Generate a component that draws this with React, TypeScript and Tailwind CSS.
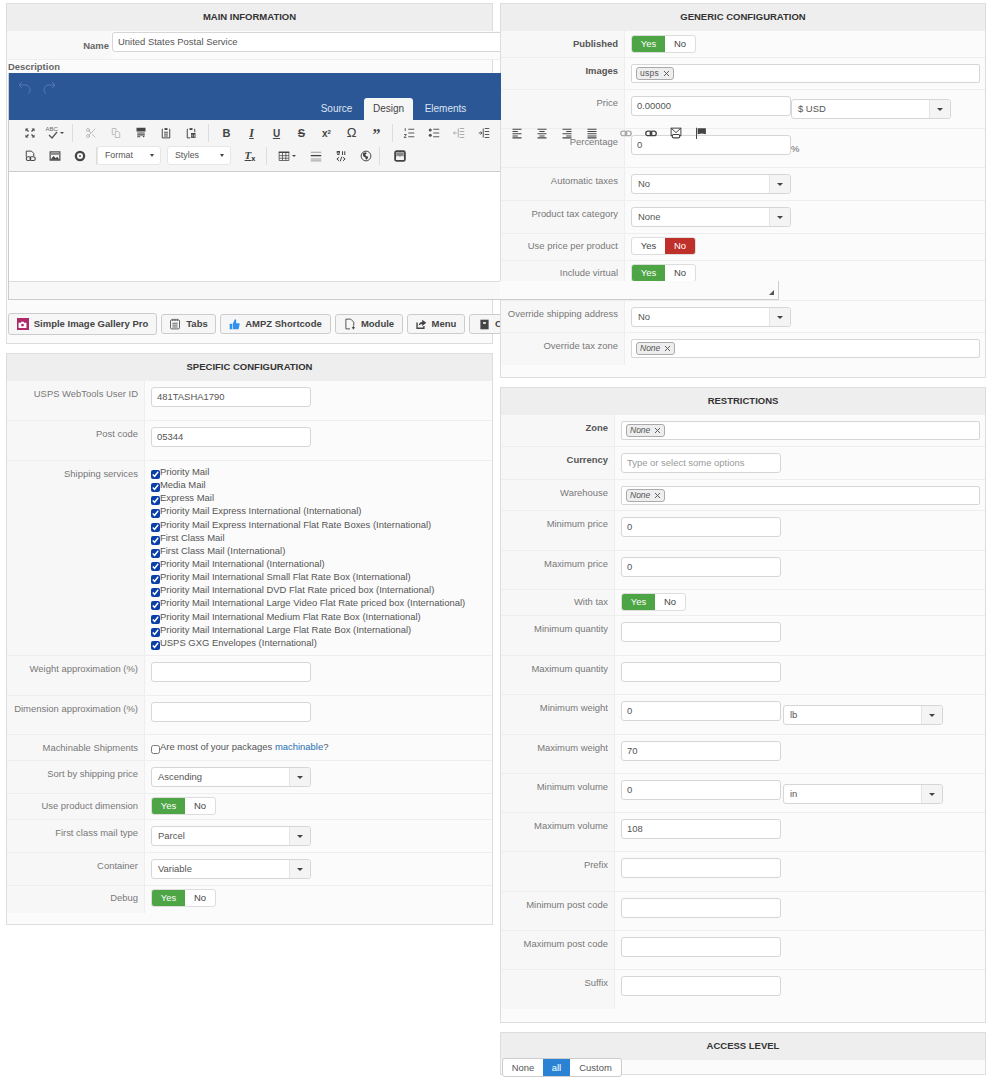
import React from "react";
import { Scissors, X } from "lucide-react";

const font = "font-['Liberation_Sans',Arial,sans-serif]";

function Header({ title, h = "h-[27px]" }: { title: string; h?: string }) {
  return (
    <div className={`${h} bg-[#eeeeee] flex items-center justify-center text-[9.5px] font-bold text-[#333] shrink-0`}>
      {title}
    </div>
  );
}

function Panel({ className, children }: { className: string; children: React.ReactNode }) {
  return <div className={`border border-[#dddddd] bg-[#fbfbfb] flex flex-col ${className}`}>{children}</div>;
}

function Row({ h, lw, label, bold, tight, flat, children }: { h: string; lw: string; label: string; bold?: boolean; tight?: boolean; flat?: boolean; children?: React.ReactNode }) {
  return (
    <div className={`flex shrink-0 ${h} ${flat ? "" : "border-b border-[#eeeeee]"}`}>
      <div className={`${lw} shrink-0 bg-[#f7f7f7] border-r border-[#eeeeee] text-right pr-[6px] ${tight ? "pt-[6px]" : "pt-[7px]"} text-[9.45px] leading-[12px] whitespace-nowrap ${bold ? "font-bold text-[#555]" : "text-[#777]"}`}>
        {label}
      </div>
      <div className={`pl-[6px] ${tight ? "pt-[3px]" : "pt-[6px]"} flex items-start flex-1 min-w-0`}>{children}</div>
    </div>
  );
}

function Input({ value = "", w = "w-[160px]", placeholder }: { value?: string; w?: string; placeholder?: string }) {
  return (
    <input
      readOnly
      value={value}
      placeholder={placeholder}
      className={`${w} h-[20px] border border-[#d6d6d6] rounded-[3px] bg-white px-[5px] pb-[2px] text-[9.45px] text-[#555] placeholder:text-[#999] outline-none shrink-0`}
    />
  );
}

function Select({ value, extra = "" }: { value: string; extra?: string }) {
  return (
    <div className={`w-[160px] h-[20px] border border-[#d6d6d6] rounded-[3px] bg-white flex items-stretch shrink-0 ${extra}`}>
      <div className="flex-1 pl-[6px] text-[9.45px] text-[#555] leading-[17px]">{value}</div>
      <div className="w-[21px] bg-[#f4f4f4] border-l border-[#e4e4e4] rounded-r-[3px] flex items-center justify-center">
        <span className="w-0 h-0 border-l-[3px] border-r-[3px] border-t-[3px] border-l-transparent border-r-transparent border-t-[#444]" />
      </div>
    </div>
  );
}

function Toggle({ yes, no, extra = "" }: { yes?: boolean; no?: boolean; extra?: string }) {
  return (
    <div className={`flex h-[18px] border border-[#dddddd] rounded-[3px] bg-white text-[9.45px] leading-[16px] text-center overflow-hidden shrink-0 ${extra}`}>
      <div className={`w-[33px] ${yes ? "bg-[#4da545] text-white" : "text-[#444]"}`}>Yes</div>
      <div className={`w-[30px] ${no ? "bg-[#c0302b] text-white" : "text-[#444]"}`}>No</div>
    </div>
  );
}

function Chosen({ tag, italic, w = "w-[349px]" }: { tag: string; italic?: boolean; w?: string }) {
  return (
    <div className={`${w} h-[19px] border border-[#d6d6d6] rounded-[2px] bg-white flex items-start pl-[4px] pt-[2px] shrink-0`}>
      <span className={`h-[13px] border border-[#aaaaaa] rounded-[3px] bg-[#eeeeee] pl-[3px] pr-[2px] flex items-center gap-[3px] text-[8.5px] text-[#555] ${italic ? "italic" : "tracking-[0.3px]"}`}>
        {tag}
        <X size={9} strokeWidth={2.5} className="text-[#555]" />
      </span>
    </div>
  );
}

const services = [
  "Priority Mail",
  "Media Mail",
  "Express Mail",
  "Priority Mail Express International (International)",
  "Priority Mail Express International Flat Rate Boxes (International)",
  "First Class Mail",
  "First Class Mail (International)",
  "Priority Mail International (International)",
  "Priority Mail International Small Flat Rate Box (International)",
  "Priority Mail International DVD Flat Rate priced box (International)",
  "Priority Mail International Large Video Flat Rate priced box (International)",
  "Priority Mail International Medium Flat Rate Box (International)",
  "Priority Mail International Large Flat Rate Box (International)",
  "USPS GXG Envelopes (International)",
];

function Ico({ children, w = "w-[25px]", extra = "" }: { children: React.ReactNode; w?: string; extra?: string }) {
  return <div className={`${w} h-[18px] flex items-center justify-center text-[#444] shrink-0 ${extra}`}>{children}</div>;
}
function Sep({ w = "w-[9px]", extra = "" }: { w?: string; extra?: string }) {
  return (
    <div className={`${w} h-[18px] flex justify-center shrink-0 ${extra}`}>
      <div className="w-px h-full bg-[#dddddd]" />
    </div>
  );
}
function Caret() {
  return <span className="ml-[2px] w-0 h-0 border-l-[2px] border-r-[2px] border-t-[2px] border-l-transparent border-r-transparent border-t-[#444]" />;
}
function Combo({ label }: { label: string }) {
  return (
    <div className="w-[64px] h-[19px] bg-white border border-[#e6e6e6] rounded-[3px] flex items-center justify-between pl-[7px] pr-[6px] text-[8.8px] text-[#555] shrink-0">
      {label}
      <span className="w-0 h-0 border-l-[2px] border-r-[2px] border-t-[3px] border-l-transparent border-r-transparent border-t-[#444]" />
    </div>
  );
}
function Btn({ w, icon, label, tall }: { w: string; icon: React.ReactNode; label: string; tall?: boolean }) {
  return (
    <div className={`${w} ${tall ? "h-[22px]" : "h-[20px]"} shrink-0 border border-[#cccccc] rounded-[3px] bg-[#f6f6f6] flex items-center justify-center gap-[5px] text-[9.5px] font-bold text-[#444] whitespace-nowrap`}>
      {icon}
      {label}
    </div>
  );
}

function Svg({ children, size = 12, vb = 16 }: { children: React.ReactNode; size?: number; vb?: number }) {
  return (
    <svg width={size} height={size} viewBox={`0 0 ${vb} ${vb}`} fill="none" stroke="currentColor" strokeWidth="1.3">
      {children}
    </svg>
  );
}

const IFull = () => (
  <Svg>
    <path d="M2 2h4L2 6zM14 2h-4l4 4zM2 14h4l-4-4zM14 14h-4l4-4z" fill="currentColor" stroke="none" />
    <path d="M4 4l2 2M12 4l-2 2M4 12l2-2M12 12l-2-2" strokeWidth="1.6" />
  </Svg>
);
const ISpell = () => (
  <span className="relative w-[12px] h-[12px] block">
    <span className="absolute left-0 top-[-1px] text-[6px] leading-[7px] text-[#666]">ABC</span>
    <svg className="absolute left-[1px] top-[4px]" width="11" height="8" viewBox="0 0 11 8" fill="none" stroke="#555" strokeWidth="1.3"><path d="M2 4l3 3 5-6" /></svg>
  </span>
);
const ICopy = () => (
  <Svg>
    <path d="M3 2h5v3M3 2v8h3" />
    <path d="M7 6h4l2 2v6H7z" />
  </Svg>
);
const IPasteDark = () => (
  <Svg>
    <path d="M2 1h12v5H2z" fill="currentColor" stroke="none" />
    <path d="M3 8h10M3 10.500h10M3 13h4" strokeWidth="1.4" />
    <path d="M10 12l1.500 2 1.500-2" fill="currentColor" stroke="none" />
  </Svg>
);
const IPasteText = () => (
  <Svg>
    <path d="M4 3H3v11.500h10V3h-1" />
    <path d="M6 1.500h4V4H6z" fill="currentColor" stroke="none" />
    <path d="M5.500 7h5M5.500 9.500h5M5.500 12h5" />
  </Svg>
);
const IPasteWord = () => (
  <Svg>
    <path d="M4 3H3v11.500h4M12 3h1v4" />
    <path d="M6 1.500h4V4H6z" fill="currentColor" stroke="none" />
    <rect x="8" y="8" width="6" height="6.500" fill="currentColor" stroke="none" />
    <path d="M9.500 10v3M12.500 10v3" stroke="#fff" strokeWidth="1" />
  </Svg>
);
const ILines = ({ kind }: { kind: "ol" | "ul" | "out" | "in" }) => (
  <Svg>
    {kind === "ol" || kind === "ul" ? (
      <>
        <path d="M7 3h8M7 8h8M7 13h8" />
        {kind === "ol" ? (
          <path d="M3 1.500v4M1.500 10h3l-3 4h3" strokeWidth="1.200" />
        ) : (
          <>
            <circle cx="3" cy="4" r="2" fill="currentColor" stroke="none" />
            <circle cx="3" cy="11" r="2" fill="currentColor" stroke="none" />
          </>
        )}
      </>
    ) : (
      <>
        <path d="M9 2h6M9 6h6M9 10h6M9 14h6" />
        <path d="M7 2v12" />
        {kind === "in" ? <path d="M1 8h4M3.500 6l2 2-2 2" /> : <path d="M5 8H1M2.500 6l-2 2 2 2" />}
      </>
    )}
  </Svg>
);
const IAlign = ({ a }: { a: "l" | "c" | "r" | "j" }) => {
  const d =
    a === "l" ? "M2 3h12M2 6h7M2 9h12M2 12h7M2 14.500h12"
    : a === "c" ? "M2 3h12M4.500 6h7M2 9h12M4.500 12h7M2 14.500h12"
    : a === "r" ? "M2 3h12M7 6h7M2 9h12M7 12h7M2 14.500h12"
    : "M2 3h12M2 6h12M2 9h12M2 12h12M2 14.500h12";
  return <Svg><path d={d} strokeWidth="1.500" /></Svg>;
};
const IChain = ({ gray }: { gray?: boolean }) => (
  <Svg>
    <g stroke={gray ? "#aaa" : "currentColor"} strokeWidth="1.800">
      <rect x="1" y="5.500" width="8" height="6" rx="3" />
      <rect x="7" y="5.500" width="8" height="6" rx="3" />
    </g>
  </Svg>
);
const IAnchorMail = () => (
  <Svg>
    <rect x="1.500" y="1.500" width="13" height="10" />
    <path d="M1.500 1.500l6.500 6 6.500-6" />
    <rect x="3" y="10" width="10" height="4.500" rx="2" fill="#fbfbfb" strokeWidth="1.600" />
  </Svg>
);
const IFlag = () => (
  <Svg>
    <path d="M2 1v15" strokeWidth="1.300" />
    <path d="M3.500 1.500h11v8l-5.500-1-5.500 1z" fill="currentColor" stroke="none" />
  </Svg>
);
const IDocLink = () => (
  <Svg>
    <path d="M3 9V1.500h7l3 3V8" />
    <rect x="3" y="9" width="6" height="5" rx="2.500" strokeWidth="1.500" />
    <rect x="8" y="9" width="7" height="5" rx="2.500" strokeWidth="1.500" />
  </Svg>
);
const IImage = () => (
  <Svg>
    <rect x="1.500" y="2.500" width="13" height="11" strokeWidth="1.500" />
    <path d="M2 13l4-5 3 3 2-2 3 4z" fill="currentColor" stroke="none" />
    <rect x="2.500" y="3.500" width="11" height="3" fill="#888" stroke="none" />
  </Svg>
);
const IDisc = () => (
  <Svg>
    <circle cx="8" cy="8" r="5.500" strokeWidth="3" />
    <circle cx="8" cy="8" r="1.200" fill="currentColor" stroke="none" />
  </Svg>
);
const ITable = () => (
  <span className="flex items-center">
    <Svg>
      <path d="M1 2h14v2H1z" fill="currentColor" stroke="none" />
      <path d="M1.500 3v11h13V3M1.500 7.500h13M1.500 11h13M6 4v10M10.500 4v10" strokeWidth="1" />
    </Svg>
    <Caret />
  </span>
);
const IHr = () => (
  <Svg>
    <path d="M1 3h14M1 12h14M1 14.500h14" stroke="#999" strokeWidth="1.300" />
    <path d="M1 7.500h14" strokeWidth="1.800" />
  </Svg>
);
const ICode = () => (
  <Svg>
    <path d="M3 2h3v2H3zM3 6h3M10 1.500v5M13 1.500v5" strokeWidth="1.400" />
    <path d="M5.500 9.500L2.500 12l3 2.500M10.500 9.500l3 2.500-3 2.500M9 9l-2 6" strokeWidth="1.300" />
  </Svg>
);
const IGlobe = () => (
  <Svg>
    <circle cx="8" cy="8" r="6.500" />
    <path d="M4 4l4-1 1 2-2 1 1 2 3 1-1 3-2 1-1-3-3-2z" fill="currentColor" stroke="none" />
  </Svg>
);
const IWidget = () => (
  <Svg>
    <rect x="1.500" y="1.500" width="13" height="13" rx="2" strokeWidth="2.400" />
    <path d="M3 3h10v6l-2-1.500-3 1.500-3-1.500-2 1.500z" fill="#888" stroke="none" />
  </Svg>
);
const ITabsDoc = () => (
  <Svg size={12}>
    <rect x="2" y="2.500" width="12" height="12" rx="1.500" strokeWidth="1.100" />
    <path d="M5 1v3M8 1v3M11 1v3M4.500 7h7M4.500 9.500h7M4.500 12h7" strokeWidth="1.100" />
  </Svg>
);
const IModule = () => (
  <Svg size={12}>
    <path d="M8 14.500H2.500v-13H9l4 4v5" strokeWidth="1.200" />
    <path d="M12.500 11v4M10.500 13h4" strokeWidth="1.500" />
  </Svg>
);
const IMenu = () => (
  <Svg size={11}>
    <path d="M1.500 5v8.500h10V10" strokeWidth="2" />
    <path d="M9 1l6 4.500L9 10V7.500c-3 0-4 1-5 2.500 0-3 2-5.500 5-5.500z" fill="currentColor" stroke="none" />
  </Svg>
);
const IContact = () => (
  <Svg size={11}>
    <path d="M2 1h12v14H2z" fill="currentColor" stroke="none" />
    <path d="M6 4.500h4v2.500H6z" fill="#f6f6f6" stroke="none" />
  </Svg>
);
const IThumb = () => (
  <svg width="11" height="11" viewBox="0 0 16 16" fill="#3090f0">
    <rect x="1" y="7" width="3.500" height="8" rx="0.500" />
    <path d="M5.500 7l3-6.500c1.500 0 2 1 2 2V6h4c.8 0 1.200.8 1 1.500l-1.500 6.500c-.2.700-.7 1-1.300 1H5.500z" />
  </svg>
);
const IGallery = () => (
  <span className="w-[12px] h-[12px] bg-[#b02a6a] flex items-center justify-center">
    <svg width="9" height="9" viewBox="0 0 16 16" fill="#fff">
      <path d="M1 5h4l1-2h4l1 2h4v9H1z" />
      <circle cx="8" cy="9" r="2.500" fill="#b02a6a" />
    </svg>
  </span>
);

export default function App() {
  return (
    <div className={`relative w-[996px] h-[1080px] overflow-hidden bg-white pl-[6px] pt-[3px] flex gap-[7px] ${font}`}>
      {/* LEFT */}
      <div className="w-[487px] shrink-0 flex flex-col gap-[9px]">
        <Panel className="h-[341px] bg-[#f5f5f5]">
          <Header title="MAIN INFORMATION" />
          <div className="w-[494px] h-[312px] overflow-hidden">
            <div className="flex h-[29px] border-b border-[#eeeeee]">
              <div className="w-[104px] shrink-0 bg-[#f8f8f8] text-right pr-[2px] pt-[9px] text-[9.45px] leading-[12px] font-bold text-[#666]">Name</div>
              <div className="pl-[1px] pt-[1px] bg-[#fbfbfb] flex-1 flex items-start">
                <Input value="United States Postal Service" w="w-[420px]" />
              </div>
            </div>
            <div className="pl-[1px] h-[13px] text-[9.45px] leading-[14px] font-bold text-[#666]">Description</div>
            <div className="ml-[1px] w-[520px] border-x border-b border-[#cccccc]">
              <div className="h-[47px] bg-[#2b5797] relative flex items-end">
                <div className="absolute left-[8px] top-[7px] flex gap-[8px] text-[#5e80b4]">
                  <Svg size={16}><path d="M5 2L2 5l3 3M2 5h6c3 0 5 2 5 5 0 2-1 3-2 4" strokeWidth="0.800" /></Svg>
                  <Svg size={16}><path d="M11 2l3 3-3 3M14 5H8C5 5 3 7 3 10c0 2 1 3 2 4" strokeWidth="0.800" /></Svg>
                </div>
                <div className="flex ml-[300px] text-[10px] leading-[22px] text-[#dde4f0]">
                  <div className="w-[55px] text-center">Source</div>
                  <div className="w-[49px] bg-[#f6f6f6] rounded-t-[3px] text-center text-[#444]">Design</div>
                  <div className="w-[65px] text-center">Elements</div>
                </div>
              </div>
              <div className="h-[52px] bg-[#f5f5f5] border-b border-[#cccccc] pl-[8px] pt-[4px] flex flex-col gap-[4px]">
                <div className="flex items-center">
                  <Ico><IFull /></Ico>
                  <Ico><ISpell /><Caret /></Ico>
                  <Sep w="w-[11px]" />
                  <Ico><span className="text-[#aaa]"><Scissors size={12} strokeWidth={1.5} /></span></Ico>
                  <Ico><span className="text-[#bbb]"><ICopy /></span></Ico>
                  <Ico><IPasteDark /></Ico>
                  <Ico><IPasteText /></Ico>
                  <Ico><IPasteWord /></Ico>
                  <Sep w="w-[11px]" />
                  <Ico><span className="font-bold text-[11px]">B</span></Ico>
                  <Ico><span className="italic font-bold font-['Liberation_Serif',serif] text-[12px] underline">I</span></Ico>
                  <Ico><span className="underline font-bold text-[10px]">U</span></Ico>
                  <Ico><span className="line-through font-bold text-[11px]">S</span></Ico>
                  <Ico><span className="font-bold text-[10px]">x<sup className="text-[6px]">2</sup></span></Ico>
                  <Ico><span className="text-[13px]">Ω</span></Ico>
                  <Ico><span className="font-bold font-['Liberation_Serif',serif] text-[16px] leading-[16px] mt-[4px]">”</span></Ico>
                  <Sep w="w-[7px]" />
                  <Ico><span className="text-[#555]"><ILines kind="ol" /></span></Ico>
                  <Ico><span className="text-[#555]"><ILines kind="ul" /></span></Ico>
                  <Ico><span className="text-[#aaa]"><ILines kind="out" /></span></Ico>
                  <Ico><span className="text-[#555]"><ILines kind="in" /></span></Ico>
                  <Sep />
                </div>
                <div className="flex items-center">
                  <Ico><IDocLink /></Ico>
                  <Ico><IImage /></Ico>
                  <Ico><IDisc /></Ico>
                  <Sep />
                  <div className="flex gap-[6px] ml-[-4px]">
                    <Combo label="Format" />
                    <Combo label="Styles" />
                  </div>
                  <Ico w="w-[24px]" extra="ml-[7px]"><span className="italic font-bold font-['Liberation_Serif',serif] text-[11px] underline">T<sub className="text-[7px] not-italic font-sans">x</sub></span></Ico>
                  <Sep />
                  <Ico w="w-[32px]"><ITable /></Ico>
                  <Ico w="w-[26px]"><IHr /></Ico>
                  <Ico w="w-[24px]"><ICode /></Ico>
                  <Ico w="w-[26px]"><IGlobe /></Ico>
                  <Sep extra="ml-[-4px]" />
                  <Ico w="w-[32px]"><IWidget /></Ico>
                </div>
              </div>
              <div className="h-[109px] bg-white" />
              <div className="h-[18px] bg-[#f8f8f8] border-t border-[#dddddd]" />
            </div>
            <div className="flex items-center gap-[4px] pl-[1px] pt-[13px]">
              <Btn tall w="w-[149px]" icon={<IGallery />} label="Simple Image Gallery Pro" />
              <Btn w="w-[55px]" icon={<ITabsDoc />} label="Tabs" />
              <Btn w="w-[111px]" icon={<IThumb />} label="AMPZ Shortcode" />
              <Btn w="w-[68px]" icon={<IModule />} label="Module" />
              <Btn w="w-[58px]" icon={<IMenu />} label="Menu" />
              <div className="h-[20px] w-[40px] shrink-0 border border-[#cccccc] rounded-[3px] bg-[#f6f6f6] flex items-center pl-[9px] gap-[5px] text-[9.5px] font-bold text-[#444]">
                <IContact />
                <span>C</span>
              </div>
            </div>
          </div>
        </Panel>

        <Panel className="h-[572px]">
          <Header title="SPECIFIC CONFIGURATION" />
          <Row h="h-[40px]" lw="w-[138px]" label="USPS WebTools User ID"><Input value="481TASHA1790" /></Row>
          <Row h="h-[40px]" lw="w-[138px]" label="Post code"><Input value="05344" /></Row>
          <Row h="h-[195px]" lw="w-[138px]" label="Shipping services">
            <div className="flex flex-col text-[9.45px] text-[#555] mt-[-1px]">
              {services.map((t) => (
                <label key={t} className="flex h-[13.15px] leading-[12px]">
                  <input type="checkbox" readOnly checked className="w-[9px] h-[9px] m-0 mt-[4px] shrink-0 accent-[#0b3fa8]" />
                  <span className="whitespace-nowrap">{t}</span>
                </label>
              ))}
            </div>
          </Row>
          <Row h="h-[40px]" lw="w-[138px]" label="Weight approximation (%)"><Input /></Row>
          <Row h="h-[39px]" lw="w-[138px]" label="Dimension approximation (%)"><Input /></Row>
          <Row h="h-[26px]" lw="w-[138px]" label="Machinable Shipments">
            <label className="flex text-[9.45px] leading-[12px] text-[#555]">
              <input type="checkbox" readOnly className="w-[9px] h-[9px] m-0 mt-[4px] shrink-0" />
              <span>Are most of your packages <span className="text-[#1f6fb2]">machinable</span>?</span>
            </label>
          </Row>
          <Row h="h-[33px]" lw="w-[138px]" label="Sort by shipping price"><Select value="Ascending" /></Row>
          <Row tight h="h-[26px]" lw="w-[138px]" label="Use product dimension"><Toggle yes /></Row>
          <Row h="h-[33px]" lw="w-[138px]" label="First class mail type"><Select value="Parcel" /></Row>
          <Row h="h-[33px]" lw="w-[138px]" label="Container"><Select value="Variable" /></Row>
          <Row tight flat h="h-[27px]" lw="w-[138px]" label="Debug"><Toggle yes /></Row>
        </Panel>
      </div>

      {/* RIGHT */}
      <div className="w-[486px] shrink-0 flex flex-col gap-[9px]">
        <Panel className="h-[375px]">
          <Header title="GENERIC CONFIGURATION" />
          <Row h="h-[27px]" lw="w-[124px]" label="Published" bold><Toggle yes extra="mt-[-2px]" /></Row>
          <Row h="h-[32px]" lw="w-[124px]" label="Images" bold><Chosen tag="usps" /></Row>
          <Row h="h-[39px]" lw="w-[124px]" label="Price">
            <Input value="0.00000" />
            <Select value="$ USD" extra="mt-[3px]" />
          </Row>
          <Row h="h-[39px]" lw="w-[124px]" label="Percentage">
            <Input value="0" />
            <span className="text-[9.45px] text-[#666] mt-[7px]">%</span>
          </Row>
          <Row h="h-[33px]" lw="w-[124px]" label="Automatic taxes"><Select value="No" /></Row>
          <Row h="h-[33px]" lw="w-[124px]" label="Product tax category"><Select value="None" /></Row>
          <Row tight h="h-[27px]" lw="w-[124px]" label="Use price per product"><Toggle no /></Row>
          <Row tight h="h-[40px]" lw="w-[124px]" label="Include virtual"><Toggle yes /></Row>
          <Row h="h-[32px]" lw="w-[124px]" label="Override shipping address"><Select value="No" /></Row>
          <Row flat h="h-[32px]" lw="w-[124px]" label="Override tax zone"><Chosen tag="None" italic /></Row>
        </Panel>

        <Panel className="h-[636px]">
          <Header title="RESTRICTIONS" />
          <Row h="h-[32px]" lw="w-[114px]" label="Zone" bold><Chosen tag="None" italic w="w-[359px]" /></Row>
          <Row h="h-[33px]" lw="w-[114px]" label="Currency" bold><Input placeholder="Type or select some options" /></Row>
          <Row h="h-[31px]" lw="w-[114px]" label="Warehouse"><Chosen tag="None" italic w="w-[359px]" /></Row>
          <Row h="h-[40px]" lw="w-[114px]" label="Minimum price"><Input value="0" /></Row>
          <Row h="h-[39px]" lw="w-[114px]" label="Maximum price"><Input value="0" /></Row>
          <Row tight h="h-[26px]" lw="w-[114px]" label="With tax"><Toggle yes /></Row>
          <Row h="h-[40px]" lw="w-[114px]" label="Minimum quantity"><Input /></Row>
          <Row h="h-[39px]" lw="w-[114px]" label="Maximum quantity"><Input /></Row>
          <Row h="h-[40px]" lw="w-[114px]" label="Minimum weight">
            <Input value="0" />
            <Select value="lb" extra="mt-[4px] ml-[2px]" />
          </Row>
          <Row h="h-[39px]" lw="w-[114px]" label="Maximum weight"><Input value="70" /></Row>
          <Row h="h-[39px]" lw="w-[114px]" label="Minimum volume">
            <Input value="0" />
            <Select value="in" extra="mt-[4px] ml-[2px]" />
          </Row>
          <Row h="h-[39px]" lw="w-[114px]" label="Maximum volume"><Input value="108" /></Row>
          <Row h="h-[40px]" lw="w-[114px]" label="Prefix"><Input /></Row>
          <Row h="h-[39px]" lw="w-[114px]" label="Minimum post code"><Input /></Row>
          <Row h="h-[39px]" lw="w-[114px]" label="Maximum post code"><Input /></Row>
          <Row flat h="h-[39px]" lw="w-[114px]" label="Suffix"><Input /></Row>
        </Panel>

        <Panel className="h-[43px] relative">
          <Header title="ACCESS LEVEL" />
          <div className="absolute left-[1px] top-[25px] flex h-[19px] border border-[#cccccc] rounded-[3px] bg-white text-[9.45px] leading-[17px] text-center text-[#555] overflow-hidden">
            <div className="w-[40px]">None</div>
            <div className="w-[27px] bg-[#2a82d4] text-white">all</div>
            <div className="w-[51px]">Custom</div>
          </div>
        </Panel>
      </div>

      {/* Editor overflow lying over the right-hand panel */}
      <div className="absolute left-[504px] top-[124px] flex items-center text-[#444]">
        <Ico><IAlign a="l" /></Ico>
        <Ico><IAlign a="c" /></Ico>
        <Ico><IAlign a="r" /></Ico>
        <Ico><IAlign a="j" /></Ico>
        <div className="w-[9px]" />
        <Ico><IChain gray /></Ico>
        <Ico><IChain /></Ico>
        <Ico><IAnchorMail /></Ico>
        <Ico><IFlag /></Ico>
      </div>
      <div className="absolute left-[500px] top-[281px] w-[279px] h-[19px] bg-[#fbfbfb] border-r border-b border-[#cccccc]">
        <span className="absolute right-[4px] bottom-[4px] w-0 h-0 border-l-[5px] border-b-[5px] border-l-transparent border-b-[#555]" />
      </div>
    </div>
  );
}
